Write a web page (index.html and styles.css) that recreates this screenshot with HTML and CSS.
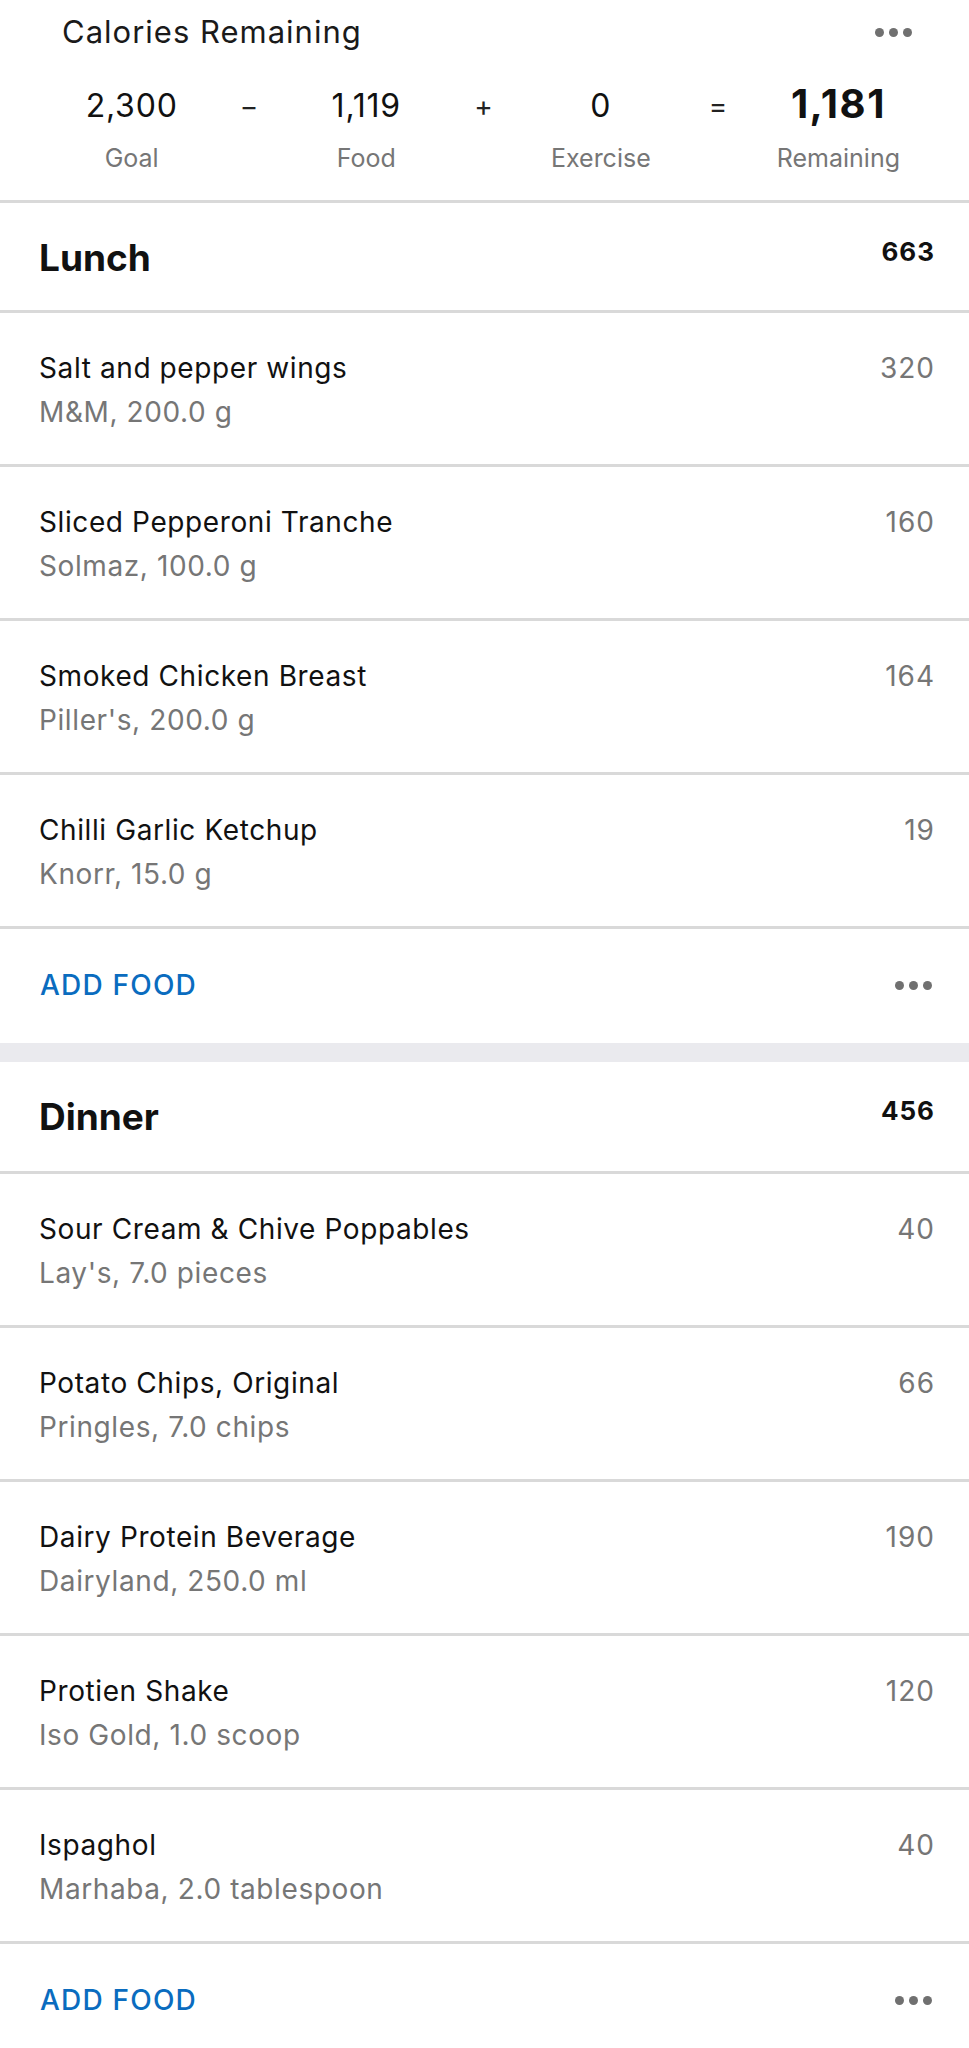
FILE: index.html
```html
<!DOCTYPE html>
<html lang="en">
<head>
    <meta charset="UTF-8">
    <meta name="viewport" content="width=device-width, initial-scale=1.0">
    <title>Diary</title>
    <link rel="stylesheet" href="styles.css">
</head>
<body>

<div class="summary">
    <div class="summary-top">
        <span class="summary-title">Calories Remaining</span>
        <span class="dots"><i></i><i></i><i></i></span>
    </div>
    <div class="equation">
        <span class="num">2,300</span>
        <span class="op">&minus;</span>
        <span class="num">1,119</span>
        <span class="op">+</span>
        <span class="num">0</span>
        <span class="op">=</span>
        <span class="num total">1,181</span>
        <span class="lbl">Goal</span>
        <span></span>
        <span class="lbl">Food</span>
        <span></span>
        <span class="lbl">Exercise</span>
        <span></span>
        <span class="lbl">Remaining</span>
    </div>
</div>

<div class="meal">
    <div class="meal-head">
        <span class="meal-name">Lunch</span>
        <span class="meal-total">663</span>
    </div>
    <div class="food">
        <div class="food-info">
            <div class="food-name">Salt and pepper wings</div>
            <div class="food-sub">M&amp;M, 200.0 g</div>
        </div>
        <span class="food-cal">320</span>
    </div>
    <div class="food">
        <div class="food-info">
            <div class="food-name">Sliced Pepperoni Tranche</div>
            <div class="food-sub">Solmaz, 100.0 g</div>
        </div>
        <span class="food-cal">160</span>
    </div>
    <div class="food">
        <div class="food-info">
            <div class="food-name">Smoked Chicken Breast</div>
            <div class="food-sub">Piller's, 200.0 g</div>
        </div>
        <span class="food-cal">164</span>
    </div>
    <div class="food">
        <div class="food-info">
            <div class="food-name">Chilli Garlic Ketchup</div>
            <div class="food-sub">Knorr, 15.0 g</div>
        </div>
        <span class="food-cal">19</span>
    </div>
    <div class="add-row">
        <span class="add-food">ADD FOOD</span>
        <span class="dots"><i></i><i></i><i></i></span>
    </div>
</div>

<div class="meal-gap"></div>

<div class="meal">
    <div class="meal-head">
        <span class="meal-name">Dinner</span>
        <span class="meal-total">456</span>
    </div>
    <div class="food">
        <div class="food-info">
            <div class="food-name">Sour Cream &amp; Chive Poppables</div>
            <div class="food-sub">Lay's, 7.0 pieces</div>
        </div>
        <span class="food-cal">40</span>
    </div>
    <div class="food">
        <div class="food-info">
            <div class="food-name">Potato Chips, Original</div>
            <div class="food-sub">Pringles, 7.0 chips</div>
        </div>
        <span class="food-cal">66</span>
    </div>
    <div class="food">
        <div class="food-info">
            <div class="food-name">Dairy Protein Beverage</div>
            <div class="food-sub">Dairyland, 250.0 ml</div>
        </div>
        <span class="food-cal">190</span>
    </div>
    <div class="food">
        <div class="food-info">
            <div class="food-name">Protien Shake</div>
            <div class="food-sub">Iso Gold, 1.0 scoop</div>
        </div>
        <span class="food-cal">120</span>
    </div>
    <div class="food">
        <div class="food-info">
            <div class="food-name">Ispaghol</div>
            <div class="food-sub">Marhaba, 2.0 tablespoon</div>
        </div>
        <span class="food-cal">40</span>
    </div>
    <div class="add-row">
        <span class="add-food">ADD FOOD</span>
        <span class="dots"><i></i><i></i><i></i></span>
    </div>
</div>

</body>
</html>
```

FILE: styles.css
```css
body {
    font-family: 'Inter', 'Roboto', sans-serif;
    margin: 0;
    padding: 0;
    background-color: #ffffff;
    color: #111111;
}
.dots {
    display: flex;
    gap: 5px;
    align-items: center;
}
.dots i {
    display: block;
    width: 9px;
    height: 9px;
    border-radius: 50%;
    background-color: #707070;
}

/* summary */
.summary {
    padding-top: 12px;
    height: 188px;
    border-bottom: 3px solid #d9d9d9;
}
.summary-top {
    display: flex;
    justify-content: space-between;
    align-items: center;
    padding: 0 57px 0 62px;
    height: 40px;
}
.summary-title {
    font-size: 31px;
    line-height: 40px;
    letter-spacing: 1px;
    color: #1a1a1a;
}
.equation {
    display: grid;
    grid-template-columns: repeat(7, 1fr);
    grid-template-rows: 44px 32px;
    row-gap: 14px;
    padding: 0 69px 0 73px;
    margin-top: 32px;
    text-align: center;
}
.num {
    font-size: 32px;
    line-height: 44px;
    letter-spacing: 0.8px;
    color: #111;
    white-space: nowrap;
}
.num.total {
    font-size: 40px;
    font-weight: 700;
    line-height: 40px;
    letter-spacing: 1.5px;
}
.op {
    font-size: 28px;
    line-height: 44px;
    color: #222;
}
.lbl {
    font-size: 25px;
    line-height: 32px;
    color: #767676;
    white-space: nowrap;
}

/* meals */
.meal-head {
    display: flex;
    justify-content: space-between;
    align-items: flex-start;
    padding: 31px 34px 28px 39px;
    border-bottom: 3px solid #d9d9d9;
}
.meal-gap + .meal .meal-head {
    padding-bottom: 30px;
}
.meal-name {
    font-size: 37px;
    font-weight: 700;
    line-height: 48px;
}
.meal-total {
    font-size: 26px;
    font-weight: 700;
    line-height: 36px;
    letter-spacing: 1px;
}
.food {
    display: flex;
    justify-content: space-between;
    align-items: flex-start;
    padding: 33px 34px 30px 39px;
    border-bottom: 3px solid #d9d9d9;
}
.food-name,
.food-sub,
.food-cal {
    font-size: 28px;
    line-height: 44px;
    letter-spacing: 0.6px;
}
.food-name {
    color: #111;
}
.food-sub,
.food-cal {
    color: #767676;
}
.food-cal {
    letter-spacing: 1px;
}
.add-row {
    display: flex;
    justify-content: space-between;
    align-items: center;
    padding: 34px 37px 36px 40px;
    height: 44px;
}
.add-food {
    font-size: 28px;
    font-weight: 500;
    line-height: 44px;
    letter-spacing: 1.2px;
    color: #0a6cbf;
}
.meal-gap {
    height: 19px;
    background-color: #eaeaee;
}
```
